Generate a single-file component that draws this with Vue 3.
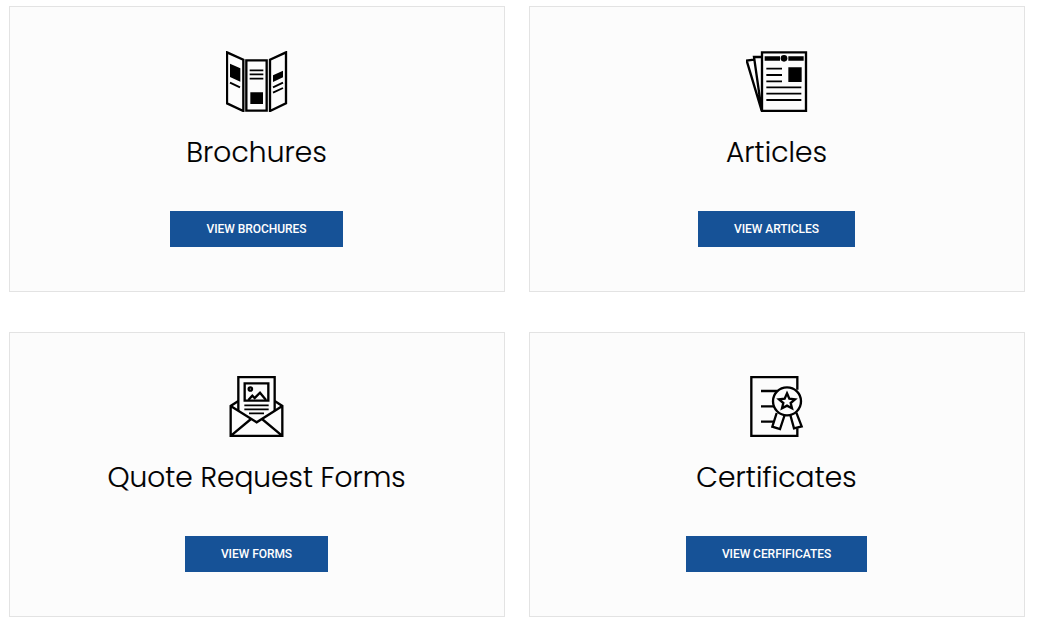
<script setup>
const cards = [
  { id: "brochures", title: "Brochures", button: "View Brochures" },
  { id: "articles", title: "Articles", button: "View Articles" },
  { id: "forms", title: "Quote Request Forms", button: "View Forms" },
  { id: "certificates", title: "Certificates", button: "View Cerfificates" },
];
</script>

<template>
  <div class="resources">
    <div v-for="card in cards" :key="card.id" class="card" :class="card.id">
      <svg class="icon" viewBox="30 27 186 183" aria-hidden="true">
        <g v-if="card.id === 'brochures'">
          <path class="line" d="M33 31 L82 53 V207 L33 184 Z" />
          <path class="line" d="M210 31 L162 53 V207 L210 184 Z" />
          <path class="line" d="M91 55 H152 V206 H91 Z" />
          <path class="line thin" d="M101 85 H142 M101 97 H142 M101 110 H142 M42 122 L72 136 M171 136 L201 122 M171 152 L201 138" />
          <path d="M42 65 L73 79 V119 L42 105 Z M201 86 V106 L171 120 V100 Z M103 151 H141 V186 H103 Z" />
        </g>
        <g v-else-if="card.id === 'articles'">
          <path class="line" d="M77 206 L32 56 L54 53 M77 206 L54 45 H78" />
          <path class="line" d="M78 31 H210 V207 H78 Z" />
          <path d="M86 43 H132 V56 H86 Z M157 43 H203 V56 H157 Z M157 76 H197 V120 H157 Z" />
          <circle cx="144" cy="49" r="10" />
          <path class="line thin" d="M91 80 H138 M91 99 H138 M91 118 H138 M91 136 H196 M91 155 H196 M91 174 H196" />
        </g>
        <g v-else-if="card.id === 'forms'">
          <path class="line" d="M67 131 V30 H176 V131" />
          <path class="line" d="M67 102 L44 117 V207 H199 V117 L176 102 M44 117 L122 166 L199 117 M46 205 L105 156 M197 205 L138 156" />
          <path class="line" d="M86 49 H157 V101 H86 Z" />
          <circle class="line" cx="103" cy="66" r="5" />
          <path class="line" d="M97 99 L109 86 L116 93 L132 77 L150 99" />
          <path class="line thin" d="M85 115 H158 M85 127 H158 M99 139 H144" />
        </g>
        <g v-else>
          <path class="line" d="M184 68 V30 H46 V207 H184 V184" />
          <path class="line" d="M75 72 H124 M75 118 H114 M75 164 H112" />
          <path class="line paper" d="M122 138 L109 179 L132 186 L146 144 M163 144 L174 184 L197 178 L181 137" />
          <circle class="line paper" cx="153" cy="103" r="42" />
          <path class="line" d="M153 79 L160 95 L177 97 L164 108 L168 124 L153 116 L138 124 L142 108 L129 97 L146 95 Z" />
        </g>
      </svg>
      <h2 class="title">{{ card.title }}</h2>
      <a class="btn" href="#">{{ card.button }}</a>
    </div>
  </div>
</template>

<style>
body {
  margin: 0;
  background: #fff;
}
</style>

<style scoped>
.resources {
  display: grid;
  grid-template-columns: 496px 496px;
  grid-auto-rows: 285.2px;
  column-gap: 24px;
  row-gap: 40px;
  padding: 6.4px 0 0 9px;
}

.card {
  box-sizing: border-box;
  display: flex;
  flex-direction: column;
  align-items: center;
  padding: 43.6px 1px 0 0;
  border: 1px solid #e3e3e3;
  background: #fcfcfc;
}

.icon {
  display: block;
  flex: none;
  width: 62px;
  height: 61px;
  margin-left: 1px;
}

.line {
  fill: none;
  stroke: #000;
  stroke-width: 7;
}

.thin {
  stroke-width: 5.5;
}

.paper {
  fill: #fcfcfc;
}

.title {
  margin: 20px 0 38px;
  font-family: Poppins, Inter, sans-serif;
  font-size: 28px;
  font-weight: 300;
  line-height: 41px;
  letter-spacing: 0.15px;
  color: #000;
  white-space: nowrap;
  -webkit-text-stroke: 0.2px #000;
}

.forms .title {
  letter-spacing: 0.04px;
}

.btn {
  box-sizing: border-box;
  display: block;
  width: 173px;
  height: 36px;
  background: #165297;
  color: #fff;
  font-family: Roboto, sans-serif;
  font-size: 12px;
  font-weight: 500;
  line-height: 36px;
  letter-spacing: -0.05px;
  text-align: center;
  text-decoration: none;
  text-transform: uppercase;
  white-space: nowrap;
}

.articles .btn {
  width: 157px;
}

.forms .btn {
  width: 143px;
}

.certificates .btn {
  width: 181px;
}
</style>
